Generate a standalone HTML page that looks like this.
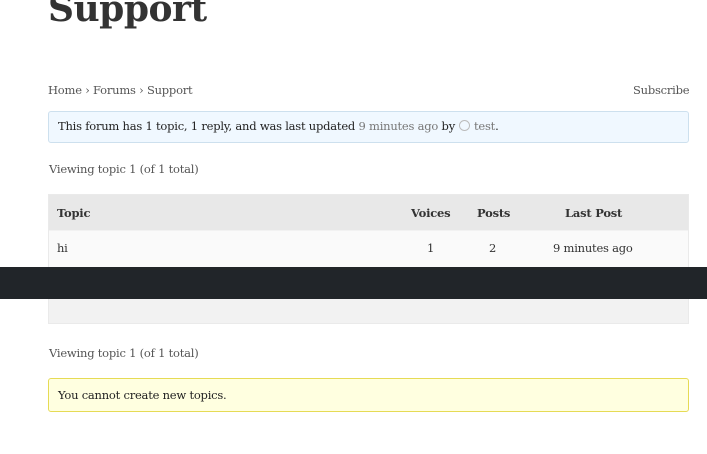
<!DOCTYPE html>
<html><head><style>
body{margin:0;width:707px;height:454px;background:#fff;font-family:"DejaVu Serif","Liberation Serif",serif;color:#333;position:relative;overflow:hidden}
.a{position:absolute;white-space:nowrap;font-size:11.5px;letter-spacing:-0.22px}
h1{position:absolute;left:48px;top:-12px;margin:0;font-size:36px;font-weight:bold;color:#333;font-family:"DejaVu Serif",serif;letter-spacing:-0.5px}
.box{position:absolute;left:48px;width:639px;border-radius:3px}
.av{display:inline-block;width:9px;height:9px;border:1px solid #bbb;border-radius:50%;vertical-align:-1px;margin:0 4px}
</style></head><body>
<h1>Support</h1>
<div class="a" style="left:48px;top:83px;color:#555">Home › Forums › Support</div>
<div class="a" style="left:633px;top:83px;color:#555">Subscribe</div>
<div class="box" style="top:111px;height:30px;background:#f0f8ff;border:1px solid #cde0ee"></div>
<div class="a" style="left:58px;top:119px;color:#222">This forum has 1 topic, 1 reply, and was last updated <span style="color:#777">9 minutes ago</span> by<span class="av"></span><span style="color:#777">test</span>.</div>
<div class="a" style="left:49px;top:162px;color:#555">Viewing topic 1 (of 1 total)</div>
<div class="box" style="top:194px;height:128px;background:#f2f2f2;border:1px solid #eaeaea;border-radius:0"></div>
<div class="box" style="top:195px;height:35px;left:49px;width:639px;background:#e8e8e8;border-radius:0"></div>
<div class="box" style="top:231px;height:36px;left:49px;width:639px;background:#fafafa;border-radius:0"></div>
<div class="a" style="left:57px;top:206px;font-weight:bold;color:#333">Topic</div>
<div class="a" style="left:411px;top:206px;font-weight:bold">Voices</div>
<div class="a" style="left:477px;top:206px;font-weight:bold">Posts</div>
<div class="a" style="left:565px;top:206px;font-weight:bold">Last Post</div>
<div class="a" style="left:57px;top:241px">hi</div>
<div class="a" style="left:427px;top:241px">1</div>
<div class="a" style="left:489px;top:241px">2</div>
<div class="a" style="left:553px;top:241px">9 minutes ago</div>
<div style="position:absolute;left:0;top:267px;width:707px;height:32px;background:#212529"></div>
<div class="a" style="left:49px;top:346px;color:#555">Viewing topic 1 (of 1 total)</div>
<div class="box" style="top:378px;height:32px;background:#ffffe0;border:1px solid #e6db55"></div>
<div class="a" style="left:58px;top:388px;color:#222">You cannot create new topics.</div>
</body></html>
